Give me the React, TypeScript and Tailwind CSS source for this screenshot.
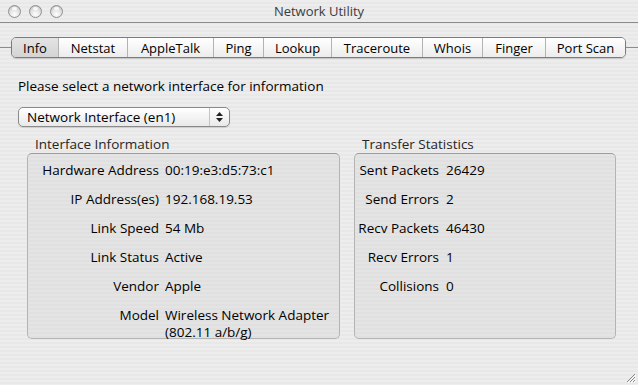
import React from "react";

const tabs: { label: string; w: number; active?: boolean }[] = [
  { label: "Info", w: 47, active: true },
  { label: "Netstat", w: 69 },
  { label: "AppleTalk", w: 86 },
  { label: "Ping", w: 50 },
  { label: "Lookup", w: 68 },
  { label: "Traceroute", w: 91 },
  { label: "Whois", w: 60 },
  { label: "Finger", w: 63 },
  { label: "Port Scan", w: 81 },
];

const leftRows: [string, string, string?][] = [
  ["Hardware Address", "00:19:e3:d5:73:c1"],
  ["IP Address(es)", "192.168.19.53"],
  ["Link Speed", "54 Mb"],
  ["Link Status", "Active"],
  ["Vendor", "Apple"],
  ["Model", "Wireless Network Adapter", "(802.11 a/b/g)"],
];

const rightRows: [string, string][] = [
  ["Sent Packets", "26429"],
  ["Send Errors", "2"],
  ["Recv Packets", "46430"],
  ["Recv Errors", "1"],
  ["Collisions", "0"],
];

function Light() {
  return (
    <div className="w-[13px] h-[13px] rounded-full border border-[#8f8f8f] bg-[radial-gradient(circle_at_50%_75%,#ffffff_0%,#e4e4e4_45%,#b9b9b9_100%)] relative">
      <div className="absolute left-[3px] top-[1px] w-[5px] h-[3px] rounded-full bg-white/80" />
    </div>
  );
}

export default function App() {
  return (
    <div
      className="w-[638px] h-[385px] relative overflow-hidden text-black bg-[repeating-linear-gradient(to_bottom,#ededed_0px,#ededed_2px,#e8e8e8_2px,#e8e8e8_4px)]"
      style={{ fontFamily: '"Open Sans", "DejaVu Sans", sans-serif' }}
    >
      {/* Title bar */}
      <div className="h-[23px] border-b border-[#8a8a8a] relative flex items-center">
        <div className="flex items-center gap-[8px] pl-[8px]">
          <Light />
          <Light />
          <Light />
        </div>
        <div className="absolute inset-0 flex items-center justify-center text-[13px] text-[#3c3c3c] leading-[16px]">
          Network Utility
        </div>
      </div>

      {/* Tabs */}
      <div className="mt-[14px] flex items-center h-[21px]">
        <div className="w-[11px] h-px bg-[#8c8c8c]" />
        <div className="flex h-[21px] rounded-[5px] border border-[#7b7b7b] overflow-hidden shadow-[0_1px_1px_rgba(0,0,0,0.15)]">
          {tabs.map((t, i) => (
            <div
              key={t.label}
              className={`flex items-center justify-center text-[13px] leading-[16px] ${
                i > 0 ? "border-l border-[#b3b3b3]" : ""
              } ${
                t.active
                  ? "bg-[linear-gradient(to_bottom,#e4e4e4,#d4d4d4)]"
                  : "bg-[linear-gradient(to_bottom,#ffffff,#f6f6f6_50%,#ececec)]"
              }`}
              style={{ width: t.w - (i === 0 || i === tabs.length - 1 ? 1 : 0) }}
            >
              {t.label}
            </div>
          ))}
        </div>
        <div className="flex-1 h-px bg-[#8c8c8c]" />
      </div>

      {/* Content */}
      <div className="pl-[18px] mt-[20px] text-[13.5px] leading-[16px]">
        Please select a network interface for information
      </div>

      <div className="ml-[18px] mt-[13px] w-[212px] h-[20px] rounded-[5px] border border-[#8a8a8a] bg-[linear-gradient(to_bottom,#ffffff,#f4f4f4_50%,#e9e9e9)] flex items-center shadow-[0_1px_1px_rgba(0,0,0,0.12)]">
        <div className="flex-1 pl-[8px] text-[13.5px] leading-[16px]">Network Interface (en1)</div>
        <div className="w-[20px] h-full border-l border-[#c4c4c4] flex flex-col items-center justify-center gap-[2px]">
          <svg width="7" height="4" viewBox="0 0 7 4">
            <path d="M3.5 0 L7 4 L0 4 Z" fill="#222" />
          </svg>
          <svg width="7" height="4" viewBox="0 0 7 4">
            <path d="M0 0 L7 0 L3.5 4 Z" fill="#222" />
          </svg>
        </div>
      </div>

      <div className="flex pl-[27px] gap-[14px] mt-[9px]">
        {/* Left group */}
        <div className="w-[313px] flex flex-col">
          <div className="pl-[8px] text-[13.5px] leading-[16px] text-[#262626]">Interface Information</div>
          <div className="mt-[1px] h-[186px] rounded-[5px] border border-[#b4b4b4] border-t-[#9c9c9c] bg-[repeating-linear-gradient(to_bottom,#e4e4e4_0px,#e4e4e4_2px,#e0e0e0_2px,#e0e0e0_4px)] pt-[8px] flex flex-col gap-[13px]">
            {leftRows.map(([k, v, v2]) => (
              <div key={k} className="flex gap-[6px] text-[13.5px] leading-[16px]">
                <div className="w-[131px] text-right shrink-0">{k}</div>
                <div>
                  <div>{v}</div>
                  {v2 && <div className="mt-[1px]">{v2}</div>}
                </div>
              </div>
            ))}
          </div>
        </div>
        {/* Right group */}
        <div className="w-[262px] flex flex-col">
          <div className="pl-[8px] text-[13.5px] leading-[16px] text-[#262626]">Transfer Statistics</div>
          <div className="mt-[1px] h-[186px] rounded-[5px] border border-[#b4b4b4] border-t-[#9c9c9c] bg-[repeating-linear-gradient(to_bottom,#e4e4e4_0px,#e4e4e4_2px,#e0e0e0_2px,#e0e0e0_4px)] pt-[8px] flex flex-col gap-[13px]">
            {rightRows.map(([k, v]) => (
              <div key={k} className="flex gap-[7px] text-[13.5px] leading-[16px]">
                <div className="w-[84px] text-right shrink-0">{k}</div>
                <div>{v}</div>
              </div>
            ))}
          </div>
        </div>
      </div>

      {/* Resize grip */}
      <svg className="absolute right-[2px] bottom-[2px]" width="11" height="11" viewBox="0 0 11 11">
        <path d="M10 2 L2 10 M10 5 L5 10 M10 8 L8 10" stroke="#8a8a8a" strokeWidth="1" />
        <path d="M11 3 L3 11 M11 6 L6 11 M11 9 L9 11" stroke="#ffffff" strokeWidth="1" />
      </svg>
    </div>
  );
}
